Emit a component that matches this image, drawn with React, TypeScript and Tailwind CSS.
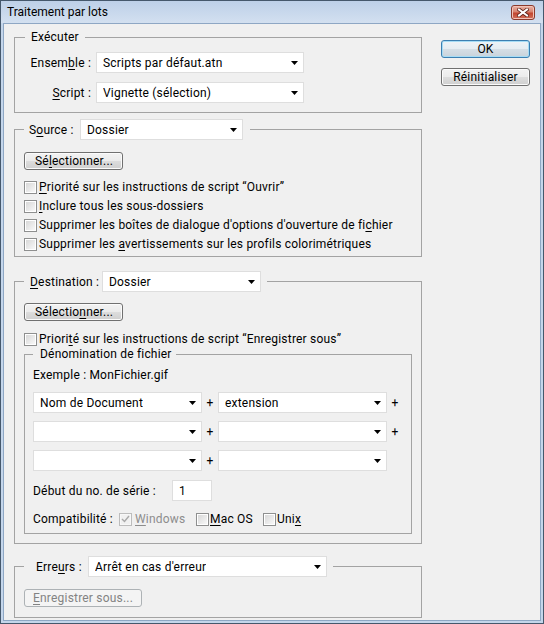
import * as React from "react";
import clsx from "clsx";

function Key({ children }: { children: React.ReactNode }) {
  return <span className="underline underline-offset-[2px]">{children}</span>;
}

function Arrow() {
  return (
    <svg width="7" height="4" viewBox="0 0 7 4" className="shrink-0">
      <path d="M0 0h7L3.5 4z" fill="#000" />
    </svg>
  );
}

function Select({ value, className }: { value?: string; className?: string }) {
  return (
    <div
      className={clsx(
        "flex h-[21px] shrink-0 items-center justify-between border border-[#dedede] bg-white pl-[6px] pr-[5px]",
        className,
      )}
    >
      <span className="truncate">{value}</span>
      <Arrow />
    </div>
  );
}

function Button({
  children,
  className,
  isDefault,
  disabled,
}: {
  children: React.ReactNode;
  className?: string;
  isDefault?: boolean;
  disabled?: boolean;
}) {
  return (
    <div
      className={clsx(
        "flex h-[18px] items-center rounded-[3px] border",
        isDefault &&
          "border-[#3c7fb1] bg-[linear-gradient(#eef3f7_0%,#e6edf2_50%,#d6dfe6_50%,#c9d3db_100%)] shadow-[inset_0_0_0_1px_#a6dcf5]",
        disabled && "border-[#adb2b5] bg-[#f4f4f4] text-[#838383]",
        !isDefault &&
          !disabled &&
          "border-[#707070] bg-[linear-gradient(#f2f2f2_0%,#ebebeb_50%,#dddddd_50%,#cfcfcf_100%)] shadow-[inset_0_0_0_1px_#fbfbfb]",
        className,
      )}
    >
      {children}
    </div>
  );
}

function Check({ checked, disabled }: { checked?: boolean; disabled?: boolean }) {
  return (
    <span
      className={clsx(
        "flex h-[13px] w-[13px] shrink-0 border p-[1px]",
        disabled ? "border-[#bcbcbc] bg-[#f7f7f7]" : "border-[#8e8f8f] bg-white",
      )}
    >
      <span
        className={clsx(
          "flex h-full w-full items-center justify-center",
          disabled ? "bg-[#f0f0f0]" : "bg-gradient-to-br from-[#d8d8d8] to-[#f8f8f8]",
        )}
      >
        {checked ? (
          <svg width="9" height="8" viewBox="0 0 9 8">
            <path d="M1 4l2.5 2.5L8 1" fill="none" stroke="#a8a8a8" strokeWidth="1.4" />
          </svg>
        ) : null}
      </span>
    </span>
  );
}

function CheckRow({ children }: { children: React.ReactNode }) {
  return (
    <div className="flex h-[16px] items-center gap-[2px]">
      <Check />
      <span>{children}</span>
    </div>
  );
}

function Plus() {
  return <span className="w-[16px] text-center text-black">+</span>;
}

function CloseButton() {
  return (
    <div className="mr-[8px] mt-[4px] flex h-[15px] w-[24px] items-center justify-center rounded-[3px] border border-[#8b3a2c] bg-[linear-gradient(#eab3a6_0%,#d8826f_45%,#c2462f_55%,#d2705b_100%)] shadow-[inset_0_0_0_1px_#f1c3b8]">
      <svg width="12" height="9" viewBox="0 0 12 9">
        <path d="M2 1.5l8 6M10 1.5l-8 6" stroke="#5c2218" strokeWidth="3.6" strokeLinecap="square" />
        <path d="M2 1.5l8 6M10 1.5l-8 6" stroke="#fff" strokeWidth="2" strokeLinecap="square" />
      </svg>
    </div>
  );
}

export default function App() {
  return (
    <div className="flex h-[624px] w-[544px] flex-col border border-[#45586c] bg-[#c4d6eb] font-['Roboto','Noto_Sans',sans-serif] text-[12px] leading-[16px] tracking-[0.2px] text-black">
      {/* title bar */}
      <div className="flex h-[22px] shrink-0 items-start justify-between bg-gradient-to-b from-[#bdd0e8] to-[#d3e0f0] pl-[6px]">
        <span className="mt-[3px] tracking-normal">Traitement par lots</span>
        <CloseButton />
      </div>

      <div className="mx-[2px] mb-[2px] flex flex-1 border border-[#8ea7c4] bg-[#f0f0f0] px-[10px] pt-[5px]">
        {/* left column */}
        <div className="flex w-[408px] shrink-0 flex-col">
          <fieldset className="border border-[#a3a3a3] px-[9px] pb-[9px]">
            <legend className="ml-[1px] px-[6px]">Exécuter</legend>
            <div className="mt-[7px] grid grid-cols-[67px_208px] items-center gap-x-[5px] gap-y-[9px]">
              <span className="text-right">
                Ensem<Key>b</Key>le :
              </span>
              <Select value="Scripts par défaut.atn" />
              <span className="text-right">
                <Key>S</Key>cript :
              </span>
              <Select value="Vignette (sélection)" />
            </div>
          </fieldset>

          <fieldset className="mt-[6px] border border-[#a3a3a3] px-[9px] pb-[4px]">
            <legend className="pl-[5px] pr-[7px]">
              <div className="flex items-center">
                <span className="w-[51px]">
                  S<Key>o</Key>urce :
                </span>
                <Select value="Dossier" className="w-[163px]" />
              </div>
            </legend>
            <Button className="mt-[12px] w-[99px] pl-[10px]">
              Sé<Key>l</Key>ectionner...
            </Button>
            <div className="mt-[9px] flex flex-col gap-[3px]">
              <CheckRow>
                <Key>P</Key>riorité sur les instructions de script “Ouvrir”
              </CheckRow>
              <CheckRow>
                <Key>I</Key>nclure tous les sous-dossiers
              </CheckRow>
              <CheckRow>
                Supprimer les boîtes de dialogue d'options d'ouverture de fi<Key>c</Key>hier
              </CheckRow>
              <CheckRow>
                Supprimer les <Key>a</Key>vertissements sur les profils colorimétriques
              </CheckRow>
            </div>
          </fieldset>

          <fieldset className="mt-[14px] border border-[#a3a3a3] px-[9px] pb-[9px]">
            <legend className="pl-[6px] pr-[6px]">
              <div className="flex items-center">
                <span className="w-[72px]">
                  <Key>D</Key>estination :
                </span>
                <Select value="Dossier" className="w-[159px]" />
              </div>
            </legend>
            <Button className="mt-[11px] w-[99px] pl-[10px]">
              Sélectio<Key>n</Key>ner...
            </Button>
            <div className="mt-[10px]">
              <CheckRow>
                Priori<Key>t</Key>é sur les instructions de script “Enregistrer sous”
              </CheckRow>
            </div>

            <fieldset className="border border-[#a3a3a3] pb-[6px] pl-[8px]">
              <legend className="pl-[7px] pr-[4px] leading-[14px]">Dénomination de fichier</legend>
              <div className="mt-[6px]">Exemple : MonFichier.gif</div>
              <div className="mt-[9px] flex flex-col gap-[8px]">
                <div className="flex items-center">
                  <Select value="Nom de Document" className="w-[169px]" />
                  <Plus />
                  <Select value="extension" className="w-[169px]" />
                  <Plus />
                </div>
                <div className="flex items-center">
                  <Select className="w-[169px]" />
                  <Plus />
                  <Select className="w-[169px]" />
                  <Plus />
                </div>
                <div className="flex items-center">
                  <Select className="w-[169px]" />
                  <Plus />
                  <Select className="w-[169px]" />
                </div>
              </div>
              <div className="mt-[9px] flex items-center">
                <span className="w-[139px]">Début du no. de série :</span>
                <div className="flex h-[21px] w-[40px] items-center border border-[#dedede] bg-white pl-[6px]">1</div>
              </div>
              <div className="mt-[10px] flex h-[16px] items-center">
                <span className="w-[86px]">Compatibilité :</span>
                <div className="flex w-[77px] items-center gap-[3px] text-[#8d8d8d]">
                  <Check checked disabled />
                  <span>
                    <Key>W</Key>indows
                  </span>
                </div>
                <div className="flex w-[67px] items-center gap-[1px]">
                  <Check />
                  <span>
                    <Key>M</Key>ac OS
                  </span>
                </div>
                <div className="flex items-center gap-[1px]">
                  <Check />
                  <span>
                    Uni<Key>x</Key>
                  </span>
                </div>
              </div>
            </fieldset>
          </fieldset>

          <fieldset className="mt-[12px] border border-[#a3a3a3] px-[9px] pb-[10px]">
            <legend className="pl-[12px] pr-[6px]">
              <div className="flex items-center">
                <span className="w-[52px]">
                  Erre<Key>u</Key>rs :
                </span>
                <Select value="Arrêt en cas d'erreur" className="w-[239px]" />
              </div>
            </legend>
            <Button disabled className="mt-[12px] w-[118px] pl-[8px]">
              <Key>E</Key>nregistrer sous...
            </Button>
          </fieldset>
        </div>

        {/* right column */}
        <div className="ml-[19px] mt-[11px] flex w-[89px] shrink-0 flex-col gap-[10px]">
          <Button isDefault className="justify-center">
            OK
          </Button>
          <Button className="justify-center">Réinitialiser</Button>
        </div>
      </div>
    </div>
  );
}
